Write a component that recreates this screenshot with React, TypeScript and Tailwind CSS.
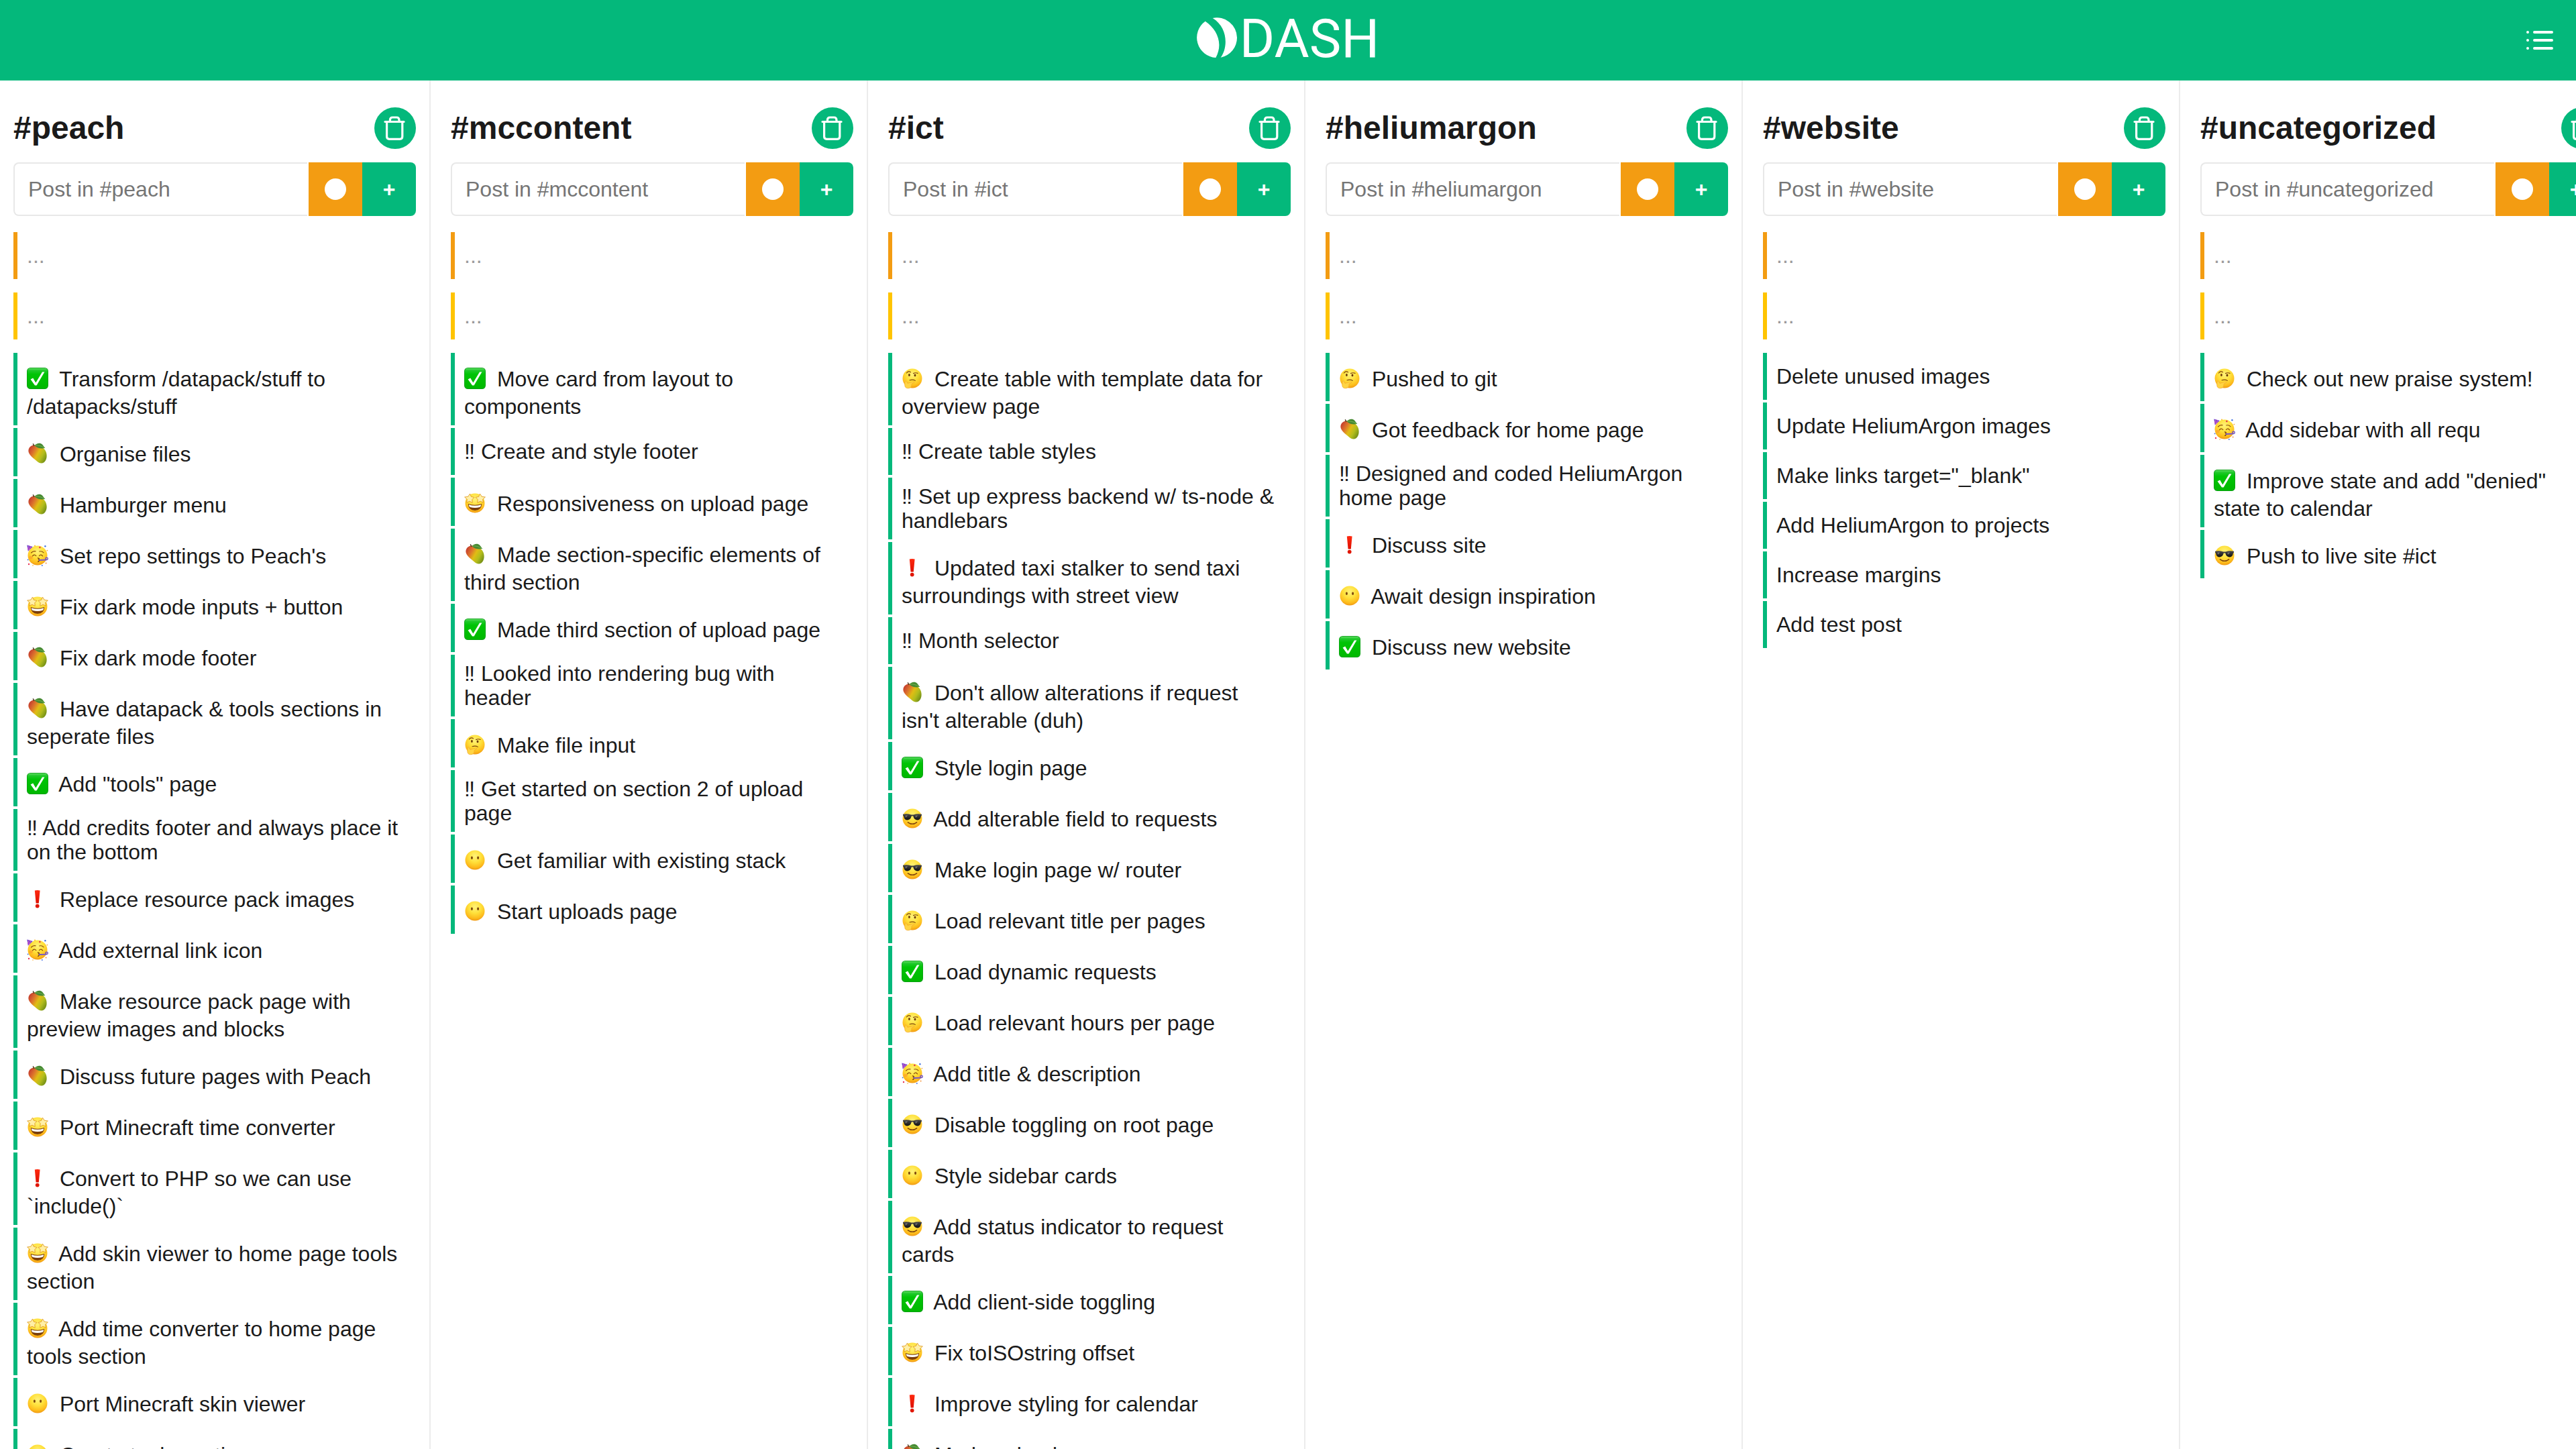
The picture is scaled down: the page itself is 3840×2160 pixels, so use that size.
import React from "react";

type EmojiName = "check" | "mango" | "party" | "star" | "bang" | "think" | "mute" | "cool";

interface Item {
  emoji?: EmojiName;
  text: string;
}

interface Board {
  tag: string;
  items: Item[];
}

const e = (emoji: EmojiName, text: string): Item => ({ emoji, text });
const t = (text: string): Item => ({ text });

const boards: Board[] = [
  {
    tag: "peach",
    items: [
      e("check", "Transform /datapack/stuff to /datapacks/stuff"),
      e("mango", "Organise files"),
      e("mango", "Hamburger menu"),
      e("party", "Set repo settings to Peach's"),
      e("star", "Fix dark mode inputs + button"),
      e("mango", "Fix dark mode footer"),
      e("mango", "Have datapack & tools sections in seperate files"),
      e("check", 'Add "tools" page'),
      t("‼ Add credits footer and always place it on the bottom"),
      e("bang", "Replace resource pack images"),
      e("party", "Add external link icon"),
      e("mango", "Make resource pack page with preview images and blocks"),
      e("mango", "Discuss future pages with Peach"),
      e("star", "Port Minecraft time converter"),
      e("bang", "Convert to PHP so we can use `include()`"),
      e("star", "Add skin viewer to home page tools section"),
      e("star", "Add time converter to home page tools section"),
      e("mute", "Port Minecraft skin viewer"),
      e("mute", "Create tools section"),
    ],
  },
  {
    tag: "mccontent",
    items: [
      e("check", "Move card from layout to components"),
      t("‼ Create and style footer"),
      e("star", "Responsiveness on upload page"),
      e("mango", "Made section-specific elements of third section"),
      e("check", "Made third section of upload page"),
      t("‼ Looked into rendering bug with header"),
      e("think", "Make file input"),
      t("‼ Get started on section 2 of upload page"),
      e("mute", "Get familiar with existing stack"),
      e("mute", "Start uploads page"),
    ],
  },
  {
    tag: "ict",
    items: [
      e("think", "Create table with template data for overview page"),
      t("‼ Create table styles"),
      t("‼ Set up express backend w/ ts-node & handlebars"),
      e("bang", "Updated taxi stalker to send taxi surroundings with street view"),
      t("‼ Month selector"),
      e("mango", "Don't allow alterations if request isn't alterable (duh)"),
      e("check", "Style login page"),
      e("cool", "Add alterable field to requests"),
      e("cool", "Make login page w/ router"),
      e("think", "Load relevant title per pages"),
      e("check", "Load dynamic requests"),
      e("think", "Load relevant hours per page"),
      e("party", "Add title & description"),
      e("cool", "Disable toggling on root page"),
      e("mute", "Style sidebar cards"),
      e("cool", "Add status indicator to request cards"),
      e("check", "Add client-side toggling"),
      e("star", "Fix toISOstring offset"),
      e("bang", "Improve styling for calendar"),
      e("mango", "Made calendar"),
    ],
  },
  {
    tag: "heliumargon",
    items: [
      e("think", "Pushed to git"),
      e("mango", "Got feedback for home page"),
      t("‼ Designed and coded HeliumArgon home page"),
      e("bang", "Discuss site"),
      e("mute", "Await design inspiration"),
      e("check", "Discuss new website"),
    ],
  },
  {
    tag: "website",
    items: [
      t("Delete unused images"),
      t("Update HeliumArgon images"),
      t('Make links target="_blank"'),
      t("Add HeliumArgon to projects"),
      t("Increase margins"),
      t("Add test post"),
    ],
  },
  {
    tag: "uncategorized",
    items: [
      e("think", "Check out new praise system!"),
      e("party", "Add sidebar with all requ"),
      e("check", 'Improve state and add "denied" state to calendar'),
      e("cool", "Push to live site #ict"),
    ],
  },
];

/* Gradients shared by every emoji drawing. */
function EmojiGradients() {
  return (
    <svg className="absolute size-0" aria-hidden="true">
      <defs>
        <radialGradient id="face" cx="0.5" cy="0.3" r="0.72">
          <stop offset="0" stopColor="#fff27a" />
          <stop offset="0.45" stopColor="#ffe03a" />
          <stop offset="0.8" stopColor="#fdbb1c" />
          <stop offset="1" stopColor="#ee9412" />
        </radialGradient>
        <linearGradient id="tick" x1="0" y1="0" x2="0" y2="1">
          <stop offset="0" stopColor="#5fdc62" />
          <stop offset="0.12" stopColor="#1fc82a" />
          <stop offset="0.3" stopColor="#00c406" />
          <stop offset="1" stopColor="#00b800" />
        </linearGradient>
        <linearGradient id="mango" x1="0.05" y1="0.25" x2="0.95" y2="0.75">
          <stop offset="0" stopColor="#c9452e" />
          <stop offset="0.25" stopColor="#dd752c" />
          <stop offset="0.5" stopColor="#e0bd14" />
          <stop offset="0.75" stopColor="#b3bd1c" />
          <stop offset="1" stopColor="#7a9418" />
        </linearGradient>
        <linearGradient id="bang" x1="0" y1="0" x2="0" y2="1">
          <stop offset="0" stopColor="#ff2a10" />
          <stop offset="1" stopColor="#dd0f00" />
        </linearGradient>
        <linearGradient id="lens" x1="0" y1="0" x2="0" y2="1">
          <stop offset="0" stopColor="#4a4a4a" />
          <stop offset="1" stopColor="#101010" />
        </linearGradient>
      </defs>
    </svg>
  );
}

const Face = () => <circle cx="16" cy="16" r="14.5" fill="url(#face)" />;

const starPath =
  "M8.6 2 L10.4 6.4 L15 7.4 L11.8 10.6 L12.2 15.4 L8 13.2 L3.6 15 L4.4 10.4 L0.6 7 L5.8 6.2 Z";

const drawings: Record<EmojiName, React.ReactNode> = {
  check: (
    <>
      <rect width="32" height="32" rx="5.5" fill="#0b9a17" />
      <rect x="0.7" y="0.7" width="30.6" height="30.6" rx="5" fill="url(#tick)" />
      <path d="M5.6 17.4 L9.2 15.6 L13.3 22.4 L23 6.4 L26.4 6.4 L14.6 26.6 L12 26.6 Z" fill="#fff" />
    </>
  ),
  mango: (
    <>
      <path
        d="M9.5 3.6 C4 5 1.4 9.8 2.8 14.6 C4.4 19.6 10.6 23.6 15 27.6 C18.4 30.8 22.4 31.6 25.6 29.2 C30 25.8 30.6 18.6 28.4 13.2 C25.6 6.6 17 2.2 9.5 3.6 Z"
        fill="url(#mango)"
      />
      <path d="M9.4 1.8 L10.6 4.4" stroke="#4c3a22" strokeWidth="1.4" strokeLinecap="round" />
      <path d="M11.4 4 C14.4 0.4 20 -0.6 23 2.4 C24.8 4.2 25.6 6.4 27.4 7.8 C22.4 9.4 15.4 8.6 11.4 4 Z" fill="#468a32" />
      <path d="M12 3.8 C16 3.6 21.8 4.4 26 7.4" stroke="#7dbb5a" strokeWidth="0.8" fill="none" />
    </>
  ),
  party: (
    <>
      <Face />
      <ellipse cx="6" cy="19" rx="2.8" ry="2.2" fill="#fb9a2c" opacity="0.6" />
      <path d="M0.3 0.6 L8.8 3 L1.8 9.8 Z" fill="#6a45cf" />
      <path d="M3.4 1.5 L1.2 7 M6.2 2.4 L2.6 8.4" stroke="#d35ac8" strokeWidth="1.2" />
      <path
        d="M6.6 12 Q9.6 8.8 13 9.8 M18.8 10 Q22.4 9 25 11.8 M8.4 16.8 Q11.2 13.6 13.8 16.6 M18.4 16.6 Q21 13.6 23.6 16.8"
        stroke="#8a4b0c"
        strokeWidth="1.2"
        strokeLinecap="round"
        fill="none"
      />
      <path d="M16.4 19.8 Q19.6 20.4 17.6 22 Q20 23.2 16.8 25.4" stroke="#6b3208" strokeWidth="1.3" fill="none" strokeLinecap="round" />
      <path d="M18.6 23 L28.6 22.6" stroke="#7254cc" strokeWidth="1.8" strokeLinecap="round" />
      <circle cx="29.6" cy="20.8" r="1.7" fill="none" stroke="#6a4cc6" strokeWidth="1.4" />
      <circle cx="19.4" cy="4" r="1.2" fill="#e0284f" />
      <circle cx="12" cy="1.4" r="0.9" fill="#f7b023" />
      <circle cx="27.4" cy="2.2" r="1.2" fill="#3d6fe0" />
      <circle cx="30.4" cy="8.6" r="0.9" fill="#f2a93b" />
      <circle cx="3" cy="29" r="1.2" fill="#e8365a" />
      <circle cx="1.6" cy="22.4" r="0.9" fill="#3d6fe0" />
      <circle cx="9" cy="31" r="0.8" fill="#f7a823" />
      <circle cx="22.8" cy="31" r="1" fill="#4b77e6" />
      <circle cx="28.6" cy="27.4" r="1" fill="#f5963c" />
    </>
  ),
  star: (
    <>
      <Face />
      <path d="M5.8 17 Q16 20.4 26.2 17 Q26 26.6 16 27 Q6 26.6 5.8 17 Z" fill="#7a3d0a" />
      <path d="M6.8 18.2 Q16 21.2 25.2 18.2 Q25 21 23.2 22 Q16 23.8 8.8 22 Q7 21 6.8 18.2 Z" fill="#fff" />
      <path d={starPath} fill="#ffefa6" stroke="#dd9418" strokeWidth="0.8" strokeLinejoin="round" />
      <path
        d={starPath}
        transform="translate(32 0) scale(-1 1)"
        fill="#ffefa6"
        stroke="#dd9418"
        strokeWidth="0.8"
        strokeLinejoin="round"
      />
    </>
  ),
  bang: (
    <>
      <path d="M11.8 3.6 Q15.6 2.4 19.6 3.6 L17.8 22.4 L13.6 22.4 Z" fill="url(#bang)" />
      <circle cx="15.7" cy="26.6" r="2.9" fill="#e01500" />
    </>
  ),
  think: (
    <>
      <Face />
      <ellipse cx="11.4" cy="11" rx="1.4" ry="1.9" fill="#6b3a0a" />
      <ellipse cx="20" cy="11.4" rx="1.4" ry="1.9" fill="#6b3a0a" />
      <path d="M7.4 8 Q10.2 4.4 13.4 6.8 M17.6 8.6 Q20.6 7 24 8.4" stroke="#7d420c" strokeWidth="1.2" strokeLinecap="round" fill="none" />
      <path d="M12 18.8 Q17 17.2 20.4 19.4" stroke="#7d420c" strokeWidth="1.1" strokeLinecap="round" fill="none" />
      <path
        d="M5.2 20.6 Q6.6 19 7.6 20.8 L9 23.4 L17.6 20.8 Q19.4 20.8 18.6 22.4 L15.2 24.2 Q15.6 29 12 30.4 Q6.6 31.8 5 28 Q4.2 24 5.2 20.6 Z"
        fill="#ffd443"
        stroke="#f0a626"
        strokeWidth="0.7"
      />
    </>
  ),
  mute: (
    <>
      <Face />
      <ellipse cx="11.4" cy="12.8" rx="1.5" ry="2.3" fill="#7d480c" />
      <ellipse cx="20.6" cy="12.8" rx="1.5" ry="2.3" fill="#7d480c" />
    </>
  ),
  cool: (
    <>
      <Face />
      <path
        d="M2 9.8 Q9 8.6 14.2 10.6 L17.8 10.6 Q23 8.6 30 9.8 L30 11.6 Q29 12 28.6 14 Q27.6 18.6 23 18.4 Q18.4 18 17.4 12.8 Q16 11.6 14.6 12.8 Q13.6 18 9 18.4 Q4.4 18.6 3.4 14 Q3 12 2 11.6 Z"
        fill="url(#lens)"
      />
      <path d="M5.4 11.6 L9.4 11.4 L6 15 Z M20.4 11.8 L24.4 11.4 L21 15 Z" fill="#8b8b8b" opacity="0.7" />
      <path d="M9.4 21.8 Q16 26.8 22.6 21.8" stroke="#7d420c" strokeWidth="1.5" strokeLinecap="round" fill="none" />
    </>
  ),
};

const labels: Record<EmojiName, string> = {
  check: "done",
  mango: "mango",
  party: "partying face",
  star: "star-struck",
  bang: "important",
  think: "thinking face",
  mute: "face without mouth",
  cool: "smiling face with sunglasses",
};

function Emoji({ name }: { name: EmojiName }) {
  return (
    <span className="mr-2 inline-block h-13 w-8 pt-3 align-[-12px]">
      <svg viewBox="0 0 32 32" className="block size-8 overflow-visible" role="img" aria-label={labels[name]}>
        {drawings[name]}
      </svg>
    </span>
  );
}

function TrashIcon() {
  return (
    <svg viewBox="0 0 62 62" className="block size-full" fill="none" stroke="#fff" strokeWidth="3.2" strokeLinecap="round" strokeLinejoin="round" aria-hidden="true">
      <path d="M16 21.5 H44" />
      <path d="M18.6 21.5 V43.5 Q18.6 47.3 22.4 47.3 H38 Q41.8 47.3 41.8 43.5 V21.5" />
      <path d="M23.4 21 V19 Q23.4 15 27.2 15 H33.2 Q37 15 37 19 V21" />
    </svg>
  );
}

function Header() {
  return (
    <header className="grid h-[120px] shrink-0 grid-cols-[1fr_auto_1fr] items-center bg-[#04b87b] pb-2 text-white">
      <span />
      <a href="#" className="flex items-center gap-1" aria-label="Dash home">
        <svg viewBox="0 0 180 180" className="size-15" fill="currentColor" aria-hidden="true">
          <path d="M38 17 C90 52 120 115 85 180 A90 90 0 0 1 38 17 Z" />
          <path d="M71 3 A90 90 0 0 1 180 90 A90 90 0 0 1 107 179 C140 135 140 45 71 3 Z" />
        </svg>
        <span className="pt-1 font-['Roboto',sans-serif] text-[80px] leading-[60px]">DASH</span>
      </a>
      <button type="button" aria-label="Menu" className="mr-[34px] justify-self-end pt-2">
        <svg viewBox="0 0 40 28" className="block h-7 w-10" stroke="currentColor" strokeWidth="4" strokeLinecap="round" aria-hidden="true">
          <path d="M2 2 H2.01 M2 14 H2.01 M2 26 H2.01 M12 2 H38 M12 14 H38 M12 26 H38" />
        </svg>
      </button>
    </header>
  );
}

function Column({ board }: { board: Board }) {
  const titleId = `title-${board.tag}`;
  return (
    <section aria-labelledby={titleId} className="w-[622px] shrink-0 border-r-2 border-[#ececec] pt-10 pr-5">
      <div className="mb-5 flex items-center justify-between">
        <h2 id={titleId} className="text-5xl font-bold">
          #{board.tag}
        </h2>
        <button type="button" aria-label={`Delete #${board.tag}`} className="size-[62px] rounded-full bg-[#04b87b]">
          <TrashIcon />
        </button>
      </div>
      <form className="mb-6 flex h-20" onSubmit={(event) => event.preventDefault()}>
        <input
          type="text"
          aria-label={`Post in #${board.tag}`}
          placeholder={`Post in #${board.tag}`}
          className="mr-0.5 min-w-0 flex-1 rounded-l-lg border-2 border-r-0 border-[#e8e8e8] px-5 text-[32px] placeholder:text-[#757575]"
        />
        <button type="button" aria-label="Status" className="flex w-20 items-center justify-center bg-[#f39c12]">
          <span className="size-8 rounded-full bg-white" />
        </button>
        <button type="submit" aria-label="Add" className="w-20 rounded-r-lg bg-[#04b87b] text-[32px] font-bold text-white">
          +
        </button>
      </form>
      <div className="mb-5 flex h-[70px] items-center border-l-6 border-[#f39c12] px-3.5 text-[#999]">...</div>
      <div className="mb-5 flex h-[70px] items-center border-l-6 border-[#ffc400] px-3.5 text-[#999]">...</div>
      <ul className="flex flex-col gap-1">
        {board.items.map((item) => (
          <li key={item.text} className="flex min-h-[70px] items-center border-l-6 border-[#04b87b] py-2.5 pr-5 pl-3.5">
            <p>
              {item.emoji && <Emoji name={item.emoji} />}
              {item.emoji && " "}
              {item.text}
            </p>
          </li>
        ))}
      </ul>
    </section>
  );
}

export default function App() {
  return (
    <div className="flex h-screen flex-col overflow-hidden bg-white font-['Liberation_Sans',Arial,sans-serif] text-[32px] leading-9 text-[#1a1a1a]">
      <EmojiGradients />
      <Header />
      <main className="flex min-h-0 flex-1 gap-[30px] overflow-hidden pl-5">
        {boards.map((board) => (
          <Column key={board.tag} board={board} />
        ))}
      </main>
    </div>
  );
}
